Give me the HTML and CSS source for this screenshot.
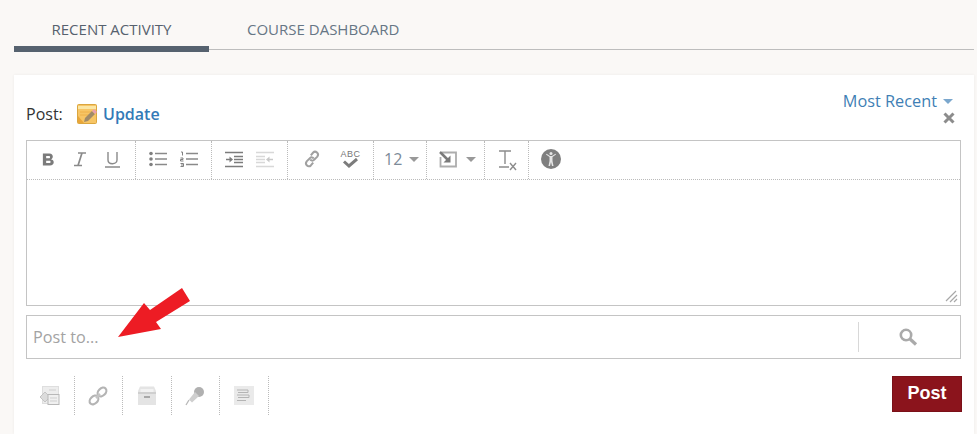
FILE: index.html
```html
<!DOCTYPE html>
<html lang="en">

<head>
    <meta charset="UTF-8">
    <title>Recent Activity</title>
    <link rel="stylesheet" href="styles.css">
</head>

<body>
    <div class="tabs">
        <a class="tab tab_active">RECENT ACTIVITY</a>
        <a class="tab">COURSE DASHBOARD</a>
    </div>

    <div class="card">
        <div class="card_head">
            <div class="post_type">
                <span class="post_label">Post:</span>
                <svg class="note_icon" width="21" height="21" viewBox="0 0 21 21">
                    <rect x="0.500" y="0.500" width="19" height="19" rx="1" fill="#f7c565" stroke="#dba63f"/>
                    <path d="M1 2h18v3H1z" fill="#fbe6a4"/>
                    <path d="M3 8h14M3 11h9" stroke="#eeb049"/>
                    <path d="M1 12l6 7H1z" fill="#e9a63a"/>
                    <path d="M7 18l1-4 7-7 3 3-7 7z" fill="#a08a68"/>
                    <path d="M15 7l2-2 3 3-2 2z" fill="#e9a0ad"/>
                </svg>
                <span class="post_name">Update</span>
            </div>
            <div class="head_right">
                <span class="sort">Most Recent<i class="caret caret_blue"></i></span>
                <svg class="close_x" width="12" height="12" viewBox="0 0 12 12"><path d="M1.500 1.500l9 9M10.500 1.500l-9 9" stroke="#8c8c8c" stroke-width="3"/></svg>
            </div>
        </div>

        <div class="editor">
            <div class="toolbar">
                <div class="group g1">
                    <span class="btn"><svg width="15" height="17" viewBox="0 0 16 16"><path d="M2 1.500h7c4.500 0 4.500 5.500 1.500 6.300 4.500.7 4 6.700-1 6.700H2zM5.500 4.300v2.400h3c1.500 0 1.500-2.400 0-2.400zM5.500 9.300v2.500h3.500c1.600 0 1.600-2.500 0-2.500z" fill="#7b7b7b" fill-rule="evenodd"/></svg></span>
                    <span class="btn"><svg width="14" height="16" viewBox="0 0 14 16"><path d="M5 2h8M1 14.500h8M9 2L5 14.500" stroke="#8a8a8a" stroke-width="1.700" fill="none"/></svg></span>
                    <span class="btn"><svg width="15" height="17" viewBox="0 0 15 17"><path d="M3 1v8c0 5 9 5 9 0V1" stroke="#8a8a8a" stroke-width="1.400" fill="none"/><path d="M0 16h15" stroke="#8a8a8a" stroke-width="1.500"/></svg></span>
                </div>
                <div class="group g2">
                    <span class="btn"><svg width="18" height="16" viewBox="0 0 18 16"><circle cx="2" cy="2.500" r="1.800" fill="#808080"/><circle cx="2" cy="8" r="1.800" fill="#808080"/><circle cx="2" cy="13.500" r="1.800" fill="#808080"/><path d="M6 2.500h12M6 8h12M6 13.500h12" stroke="#8a8a8a" stroke-width="1.300"/></svg></span>
                    <span class="btn"><svg width="18" height="17" viewBox="0 0 18 17"><path d="M1 1h1.500v3.500M.5 7h2.500v1.500H.5V10h3M.5 12.500h3v3h-3M1 14h2.500" stroke="#808080" fill="none"/><path d="M6 2.500h12M6 8h12M6 13.500h12" stroke="#8a8a8a" stroke-width="1.300"/></svg></span>
                </div>
                <div class="group g2">
                    <span class="btn"><svg width="18" height="17" viewBox="0 0 18 17"><path d="M0 1.500h18M9 5.500h9M9 8.500h9M9 11.500h9M0 15.500h18" stroke="#7c7c7c" stroke-width="1.500"/><path d="M1 8.500h4" stroke="#7c7c7c" stroke-width="1.500"/><path d="M4.500 5.500l3.500 3-3.500 3z" fill="#7c7c7c"/></svg></span>
                    <span class="btn"><svg width="18" height="17" viewBox="0 0 18 17"><path d="M0 1.500h18M0 5.500h9M0 8.500h9M0 11.500h9M0 15.500h18" stroke="#d8d8d8" stroke-width="1.500"/><path d="M13 8.500h4" stroke="#c8c8c8" stroke-width="1.500"/><path d="M13.500 5.500l-3.500 3 3.500 3z" fill="#c8c8c8"/></svg></span>
                </div>
                <div class="group g3">
                    <span class="btn btn_wide link_btn"><svg width="20" height="20" viewBox="0 0 17 17"><path d="M7.500 5.500l2-2.500c2-2 5.500 1 3.500 3.500l-2.500 2.500c-1.500 1.500-3 .8-3.500 0M9.500 11.500l-2 2.500c-2 2.200-5.500-1-3.500-3.500l2.500-2.500c1.500-1.500 3-.8 3.500 0" stroke="#a0a0a0" stroke-width="1.700" fill="none"/></svg></span>
                    <span class="btn btn_wide spell"><span class="abc">ABC</span><svg width="17" height="10" viewBox="0 0 17 10"><path d="M2 3.500l5 4.500 8-7" stroke="#7c7c7c" stroke-width="3" fill="none"/></svg></span>
                </div>
                <div class="group g4">
                    <span class="size">12</span><i class="caret"></i>
                </div>
                <div class="group g5">
                    <svg width="18" height="17" viewBox="0 0 18 17"><path d="M3 1.500h14v14H1.500V6" stroke="#adadad" stroke-width="1.800" fill="none"/><path d="M1 1l8 8" stroke="#7a7a7a" stroke-width="2.500"/><path d="M11.500 4.500v7h-7z" fill="#7a7a7a"/></svg>
                    <i class="caret"></i>
                </div>
                <div class="group g6">
                    <svg width="18" height="21" viewBox="0 0 18 21"><path d="M0 1h12M6 1v13M0 17h10" stroke="#8c8c8c" stroke-width="1.400" fill="none"/><path d="M11 13l6 7M17 13l-6 7" stroke="#8c8c8c" stroke-width="1.400"/></svg>
                </div>
                <div class="group g7">
                    <svg width="20" height="20" viewBox="0 0 20 20"><circle cx="10" cy="10" r="10" fill="#7f7f7f"/><circle cx="10" cy="4.500" r="1.500" fill="#e6e6e6"/><path d="M5 5.500l3.500 2.500v4l-1 5h1.500l1-4 1 4h1.500l-1-5V8l3.500-2.500-.6-.8L11 7H9L5.600 4.700z" fill="#e6e6e6"/></svg>
                </div>
            </div>
            <div class="edit_area">
                <svg class="resize" width="14" height="14" viewBox="0 0 14 14"><path d="M2 12L12 2M6 13l7-7M10 13l3-3" stroke="#a8a8a8" stroke-width="1.200"/></svg>
            </div>
        </div>

        <div class="post_to">
            <span class="post_to_text">Post to...</span>
            <span class="search_cell">
                <svg width="19" height="18" viewBox="0 0 19 18"><circle cx="7" cy="7" r="5.200" fill="none" stroke="#aaa" stroke-width="2.600"/><path d="M11 11l6 5.500" stroke="#aaa" stroke-width="3.200"/></svg>
            </span>
        </div>

        <div class="foot">
            <div class="attach">
                <span class="attach_btn"><svg width="20" height="20" viewBox="0 0 20 20"><rect x="2.500" y="0.500" width="16" height="17" fill="#ededed" stroke="#dedede"/><path d="M0 11l5-5 5 5-5 5z" fill="#dcdcdc" stroke="#c4c4c4"/><rect x="8" y="8.500" width="11" height="10" fill="#f0f0f0" stroke="#b8b8b8"/><path d="M10 12h7M10 15h7M9 4h7" stroke="#cfcfcf"/></svg></span>
                <span class="attach_btn"><svg width="20" height="20" viewBox="0 0 20 20"><ellipse cx="6" cy="14" rx="5" ry="3.600" transform="rotate(-45 6 14)" fill="none" stroke="#b4b4b4" stroke-width="2.200"/><ellipse cx="14" cy="6" rx="5" ry="3.600" transform="rotate(-45 14 6)" fill="none" stroke="#b4b4b4" stroke-width="2.200"/><path d="M8 12l4-4" stroke="#c4c4c4" stroke-width="2.500"/></svg></span>
                <span class="attach_btn"><svg width="18" height="19" viewBox="0 0 18 19"><path d="M0 5l2-4.500h14L18 5v14H0z" fill="#e4e4e4"/><path d="M2.500 3h13v3h-13z" fill="#f2f2f2"/><path d="M0 7h18" stroke="#c8c8c8" stroke-width="1.500"/><path d="M6 11h6" stroke="#a8a8a8" stroke-width="2"/></svg></span>
                <span class="attach_btn"><svg width="20" height="20" viewBox="0 0 20 20"><circle cx="14" cy="6" r="5" fill="#b0b0b0"/><path d="M10 6l4 4-7 6.500-3-3z" fill="#cfcfcf"/><path d="M4 14l-3 5" stroke="#b8b8b8" stroke-width="1.300"/></svg></span>
                <span class="attach_btn"><svg width="20" height="20" viewBox="0 0 20 20"><rect width="20" height="19" fill="#eaeaea"/><path d="M3 4h11v2.500H4M3 9h12v2.500H4M3 14.500h9" stroke="#b4b4b4" fill="none"/></svg></span>
            </div>
            <button class="post_btn">Post</button>
        </div>

        <!-- callout drawn over the screenshot -->
        <svg class="arrow" width="74" height="51" viewBox="0 0 74 51"><path d="M0 49L26 15l6 7L64 0l8 13-34 21 5 7z" fill="#ed1c24"/></svg>
    </div>
</body>

</html>
```

FILE: styles.css
```css
* {
    margin: 0;
    padding: 0;
    box-sizing: border-box;
}

html,
body {
    overflow: hidden;
}

body {
    height: 434px;
    background: #faf8f6;
    padding: 0 3px 0 14px;
    font-family: "Open Sans", "Liberation Sans", sans-serif;
}

.tabs {
    display: flex;
    height: 50px;
    border-bottom: 1px solid #bdbdbd;
}

.tab {
    height: 52px;
    padding-top: 19px;
    font-size: 15px;
    line-height: 20px;
    color: #667685;
    margin-left: 38px;
}

.tab_active {
    width: 195px;
    margin-left: 0;
    text-align: center;
    color: #56616e;
    border-bottom: 6px solid #56626f;
}

.card {
    position: relative;
    margin-top: 25px;
    height: 359px;
    background: #fff;
    padding: 18px 13px 0 12px;
    box-shadow: 0 0 3px rgba(0, 0, 0, 0.06);
}

.card_head {
    display: flex;
    justify-content: space-between;
    height: 47px;
}

.post_type {
    display: flex;
    align-items: center;
    height: 24px;
    margin-top: 9px;
}

.post_label {
    font-size: 16px;
    color: #333;
    width: 51px;
}

.note_icon {
    margin-right: 5px;
}

.post_name {
    font-size: 16px;
    font-weight: 600;
    color: #337ab7;
}

.head_right {
    display: flex;
    flex-direction: column;
    align-items: flex-end;
    padding-right: 6px;
}

.sort {
    font-size: 16.300px;
    line-height: 16px;
    color: #3f7fb5;
    padding-right: 2px;
}

.close_x {
    margin-top: 3px;
}

.caret {
    display: inline-block;
    width: 0;
    height: 0;
    border-left: 5px solid transparent;
    border-right: 5px solid transparent;
    border-top: 5px solid #999;
}

.caret_blue {
    border-top-color: #7ba7cd;
    margin-left: 6px;
    vertical-align: 3px;
}

.editor {
    border: 1px solid #c4c4c4;
    height: 166px;
    display: flex;
    flex-direction: column;
}

.toolbar {
    display: flex;
    height: 39px;
    border-bottom: 1px dotted #bbb;
}

/* the original icons are scaled bitmaps, a bit soft */
.toolbar svg,
.attach svg,
.search_cell svg {
    filter: blur(0.4px);
}

.group {
    display: flex;
    align-items: center;
    padding-bottom: 2px;
    border-right: 1px dotted #bbb;
}

.g1 {
    width: 109px;
    padding-left: 5px;
    padding-right: 7px;
}

.g2 {
    width: 76px;
    padding-left: 6px;
    padding-right: 6px;
}

.g3 {
    width: 86px;
    padding-left: 5px;
    padding-right: 6px;
}

.g4 {
    width: 53px;
    padding-left: 10px;
}

.g4 .caret {
    margin-left: 7px;
}

.g5 {
    width: 58px;
    padding-left: 12px;
}

.g5 .caret {
    margin-left: 9px;
}

.g6 {
    width: 44px;
    padding-left: 14px;
    padding-top: 2px;
}

.g7 {
    border-right: none;
    padding-left: 12px;
}

.btn {
    width: 32px;
    display: flex;
    flex-direction: column;
    align-items: center;
    justify-content: center;
}

.btn_wide {
    width: 37px;
}

.spell {
    line-height: 8px;
    padding-left: 4px;
}

.abc {
    font-family: "Liberation Sans", sans-serif;
    font-size: 9px;
    color: #777;
    letter-spacing: 0.5px;
}

.size {
    font-size: 16px;
    color: #7d8b99;
}

.edit_area {
    position: relative;
    flex: 1;
}

.resize {
    position: absolute;
    right: 2px;
    bottom: 2px;
}

.post_to {
    display: flex;
    align-items: center;
    justify-content: space-between;
    width: 935px;
    height: 44px;
    margin-top: 9px;
    border: 1px solid #c4c4c4;
    padding-left: 6px;
}

.post_to_text {
    font-size: 16.200px;
    color: #a3a3a3;
}

.search_cell {
    display: flex;
    align-items: center;
    justify-content: center;
    width: 102px;
    height: 30px;
    padding-right: 2px;
    border-left: 1px solid #d8d8d8;
}

.foot {
    display: flex;
    justify-content: space-between;
    align-items: flex-start;
    margin-top: 17px;
}

.attach {
    display: flex;
}

.attach_btn {
    display: flex;
    align-items: center;
    justify-content: center;
    width: 48.500px;
    height: 39px;
    border-right: 1px dotted #bbb;
}

.post_btn {
    width: 70px;
    height: 36px;
    margin-right: -1px;
    padding-bottom: 1px;
    background: #8b141c;
    border: 1px solid #7a1018;
    color: #fff;
    font-family: "Liberation Sans", sans-serif;
    font-size: 18px;
    font-weight: 700;
}

.arrow {
    position: absolute;
    left: 104px;
    top: 213px;
}
```
